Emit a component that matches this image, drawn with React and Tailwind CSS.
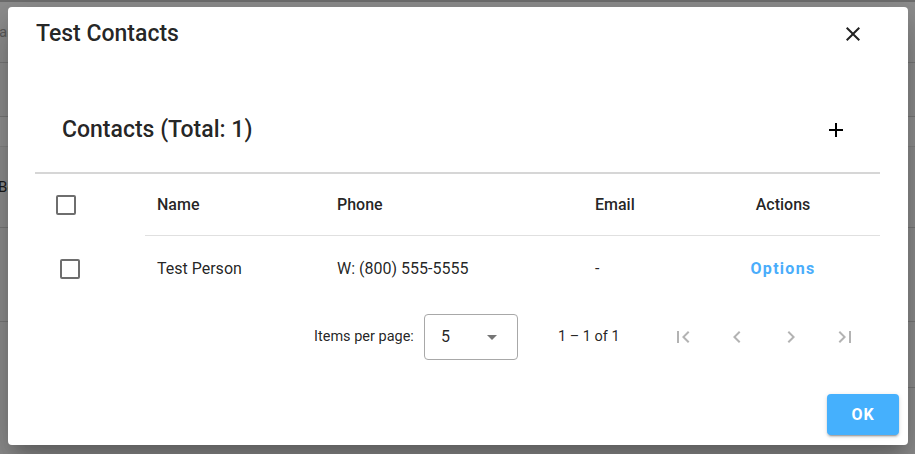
import React from "react";

const font = { fontFamily: "Roboto, 'Noto Sans', sans-serif" };

function Icon({ d, className }) {
  return (
    <svg viewBox="0 0 24 24" className={className} fill="currentColor">
      <path d={d} />
    </svg>
  );
}

const paths = {
  close: "M19 6.41L17.59 5 12 10.59 6.41 5 5 6.41 10.59 12 5 17.59 6.41 19 12 13.41 17.59 19 19 17.59 13.41 12z",
  add: "M19 13h-6v6h-2v-6H5v-2h6V5h2v6h6v2z",
  first: "M18.41 16.59L13.82 12l4.59-4.59L17 6l-6 6 6 6zM6 6h2v12H6z",
  prev: "M15.41 7.41L14 6l-6 6 6 6 1.41-1.41L10.83 12z",
  next: "M10 6L8.59 7.41 13.17 12l-4.58 4.59L10 18l6-6z",
  last: "M5.59 7.41L10.18 12l-4.59 4.59L7 18l6-6-6-6zM16 6h2v12h-2z",
  caret: "M7 10l5 5 5-5z",
};

function Checkbox({ className }) {
  return <div className={"w-[20px] h-[20px] border-2 border-[#6e6e6e] rounded-[2px] " + className} />;
}

function Backdrop() {
  return (
    <div className="absolute inset-0 bg-[#8f8f8f] flex flex-col text-[15px]">
      <div className="h-[2px] bg-[#6f6f6f]" />
      <div className="h-[61px] border-b border-[#7a7a7a] flex items-center">
        <span className="ml-[-1px] text-[#5c5c5c]">ar</span>
      </div>
      <div className="h-[54px] border-b border-[#7a7a7a]" />
      <div className="h-[30px] bg-[#939393] border-b border-[#858585]" />
      <div className="h-[81px] border-b border-[#7a7a7a] flex items-center">
        <span className="ml-[-2px] text-[#1a1a1a]">Bo</span>
      </div>
      <div className="h-[94px] border-b border-[#7a7a7a]" />
      <div className="h-[66px] flex justify-end">
        <div className="w-[10px] h-full border-b border-[#7a7a7a]" />
      </div>
    </div>
  );
}

export default function App() {
  return (
    <div className="relative w-[915px] h-[454px] overflow-hidden" style={font}>
      <Backdrop />
      <div className="absolute left-[8px] top-[7px] w-[900px] h-[438px] bg-white rounded-[4px] shadow-[0_11px_15px_-7px_rgba(0,0,0,0.2),0_24px_38px_3px_rgba(0,0,0,0.14),0_9px_46px_8px_rgba(0,0,0,0.12)] flex flex-col text-[rgba(0,0,0,0.87)]">
        <div className="flex items-center justify-between pl-[28px] pr-[43px] pt-[13px] h-[40px]">
          <h2 className="text-[23px] leading-[28px] font-medium">Test Contacts</h2>
          <Icon d={paths.close} className="w-6 h-6 text-[#222]" />
        </div>

        <div className="ml-[27px] mr-[28px] flex flex-col">
          <div className="mt-[59px] h-[48px] flex items-center justify-between pl-[27px] pr-[32px]">
            <span className="text-[23px] font-medium">Contacts (Total: 1)</span>
            <Icon d={paths.add} className="w-6 h-6 text-black" />
          </div>
          <div className="mt-[18px] h-[2px] bg-[#d6d6d6]" />

          <div className="flex h-[62px] items-center text-[16px] font-medium">
            <div className="w-[110px] h-full flex items-center">
              <Checkbox className="ml-[21px]" />
            </div>
            <div className="flex-1 h-full flex items-center border-b border-[#e0e0e0]">
              <div className="w-[180px] pl-[12px]">Name</div>
              <div className="w-[258px] pl-[12px]">Phone</div>
              <div className="w-[103px] pl-[12px]">Email</div>
              <div className="flex-1 text-center">Actions</div>
            </div>
          </div>

          <div className="flex h-[66px] items-center text-[16px]">
            <div className="w-[110px] flex items-center">
              <Checkbox className="ml-[25px]" />
            </div>
            <div className="w-[180px] pl-[12px]">Test Person</div>
            <div className="w-[258px] pl-[12px]">W: (800) 555-5555</div>
            <div className="w-[103px] pl-[12px]">-</div>
            <div className="flex-1 text-center">
              <span className="text-[#4aadfb] text-[16px] font-bold tracking-[0.08em]">Options</span>
            </div>
          </div>

          <div className="mt-[7px] h-[56px] flex items-center text-[14.5px] text-[rgba(0,0,0,0.87)]">
            <span className="ml-[279px] w-[110px]">Items per page:</span>
            <div className="w-[94px] h-[46px] border border-[#a8a8a8] rounded-[4px] flex items-center justify-between pl-[16px] pr-[13px] text-[16px]">
              <span>5</span>
              <Icon d={paths.caret} className="w-6 h-6 text-[#757575]" />
            </div>
            <span className="ml-[40px] w-[98px]">1 – 1 of 1</span>
            <div className="flex">
              {[paths.first, paths.prev, paths.next, paths.last].map((d, i) => (
                <div key={i} className="w-[54px] h-[40px] flex items-center justify-center">
                  <Icon d={d} className="w-6 h-6 text-[#b3b3b3]" />
                </div>
              ))}
            </div>
          </div>
        </div>

        <div className="mt-[29px] flex justify-end pr-[9px]">
          <button className="w-[72px] h-[41px] rounded-[4px] bg-[#45b0fd] text-white font-bold text-[16px] tracking-[0.05em] shadow-[0_3px_1px_-2px_rgba(0,0,0,0.2),0_2px_2px_0_rgba(0,0,0,0.14),0_1px_5px_0_rgba(0,0,0,0.12)]">
            OK
          </button>
        </div>
      </div>
    </div>
  );
}
